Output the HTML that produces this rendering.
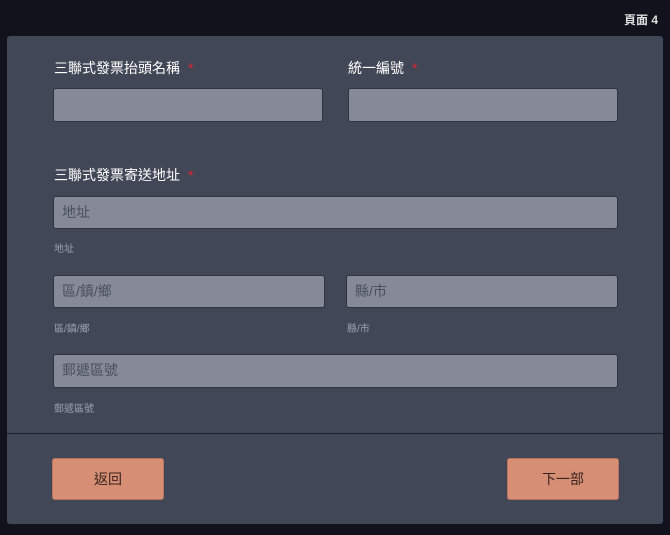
<!DOCTYPE html>
<html><head><meta charset="utf-8"><style>
*{margin:0;padding:0;box-sizing:border-box}
body{width:670px;height:535px;background:#11121b;position:relative;overflow:hidden;font-family:"Liberation Sans","Noto Sans CJK TC",sans-serif}
.card{position:absolute;left:7px;top:36px;width:656px;height:488px;background:#414756;border-radius:3px}
.a{position:absolute}
.lbl{color:#fff;font-size:14px}
.lbl b{color:#e0242c;font-weight:normal;margin-left:8px}
.in{position:absolute;background:#858a96;border:1px solid #2f3440;border-radius:3px;color:#4a4f5c;font-size:14px;padding-left:8px;line-height:31px}
.sub{position:absolute;color:#9aa0ad;font-size:10px}
.btn{position:absolute;background:#d68e74;border:1px solid #b97460;border-radius:3px;color:#3a2420;font-size:14px;text-align:center;line-height:40px;width:112px;height:42px}
</style></head><body>
<div class="a" style="right:12px;top:11px;color:#ddd;font-size:12px;font-weight:bold">頁面 4</div>
<div class="card"></div>
<div class="a lbl" style="left:54px;top:58px">三聯式發票抬頭名稱<b>*</b></div>
<div class="a lbl" style="left:348px;top:58px">統一編號<b>*</b></div>
<div class="in" style="left:53px;top:88px;width:270px;height:34px"></div>
<div class="in" style="left:348px;top:88px;width:270px;height:34px"></div>
<div class="a lbl" style="left:54px;top:165px">三聯式發票寄送地址<b>*</b></div>
<div class="in" style="left:53px;top:196px;width:565px;height:33px">地址</div>
<div class="sub" style="left:54px;top:240px">地址</div>
<div class="in" style="left:53px;top:275px;width:272px;height:33px">區/鎮/鄉</div>
<div class="in" style="left:346px;top:275px;width:272px;height:33px">縣/市</div>
<div class="sub" style="left:54px;top:320px">區/鎮/鄉</div>
<div class="sub" style="left:347px;top:320px">縣/市</div>
<div class="in" style="left:53px;top:354px;width:565px;height:34px">郵遞區號</div>
<div class="sub" style="left:54px;top:400px">郵遞區號</div>
<div class="a" style="left:7px;top:433px;width:656px;height:1px;background:#1e2230"></div>
<div class="btn" style="left:52px;top:458px">返回</div>
<div class="btn" style="left:507px;top:458px">下一部</div>
</body></html>
